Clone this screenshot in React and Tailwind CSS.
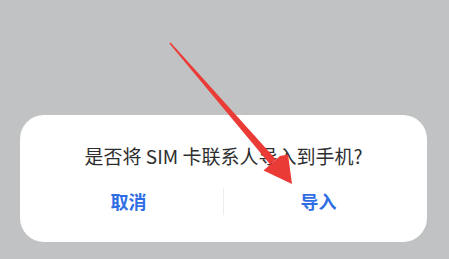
import React from 'react';

function Arrow() {
  return (
    <svg className="absolute inset-0 pointer-events-none" width="449" height="259" viewBox="0 0 449 259">
      <polygon points="170.6,42.6 169.4,43.4 270.2,164.6 276,159.4" fill="#ea3b36" />
      <polygon points="292,184 263.5,170.5 271.5,163.5 280,156 288,154.5" fill="#ea3b36" />
    </svg>
  );
}

export default function App() {
  return (
    <div className="relative w-[449px] h-[259px] bg-[#c1c2c3] pt-[115px] pl-[20px] pr-[22px] font-['Noto_Sans_CJK_SC','Noto_Sans',sans-serif] overflow-hidden">
      <div className="bg-white rounded-[24px] h-[127px] pt-[29px]">
        <p className="text-center text-[19px] leading-[24px] text-[#2e2e2e]">是否将 SIM 卡联系人导入到手机?</p>
        <div className="flex items-center h-[44px] mt-[11px] px-[14px]">
          <button className="flex-1 text-center text-[18px] font-semibold text-[#2f6de5]">取消</button>
          <div className="w-px h-[27px] bg-[#ececec]" />
          <button className="flex-1 text-center text-[18px] font-semibold text-[#2f6de5]">导入</button>
        </div>
      </div>
      <Arrow />
    </div>
  );
}
